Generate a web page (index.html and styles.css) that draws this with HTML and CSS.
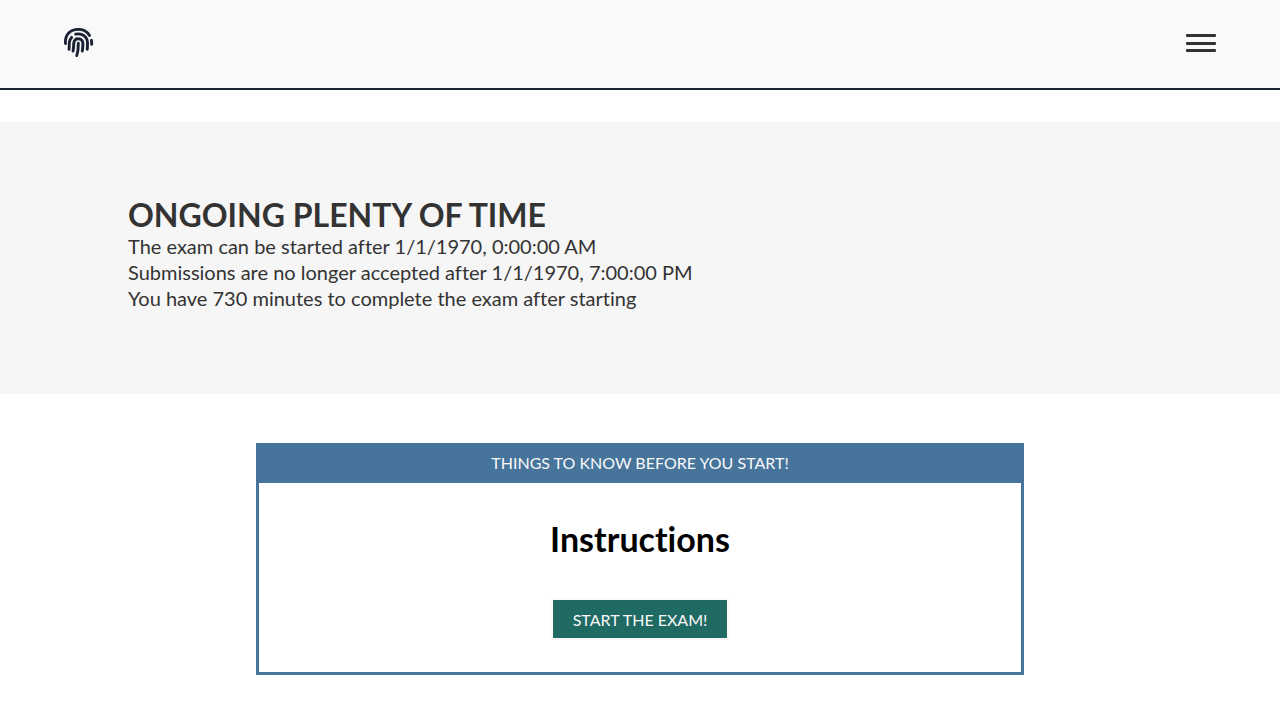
FILE: index.html
```html
<!DOCTYPE html>
<html lang="en">
<head>
<meta charset="utf-8">
<meta name="viewport" content="width=device-width, initial-scale=1">
<title>Ongoing Plenty of Time</title>
<link rel="stylesheet" href="styles.css">
</head>
<body>
<header class="site-header">
  <a class="logo" href="#" aria-label="Home">
    <svg viewBox="0 0 30 30" width="30" height="30" fill="none" stroke="currentColor" stroke-width="2.900" stroke-linecap="round" stroke-linejoin="round" aria-hidden="true">
      <path d="M1.500 15.500C.8 6.500 6.500 1.400 14.200 1.400c5 0 9 2.300 11.300 6"/>
      <path d="M27.400 12.300c.4 1.300.4 2.400.2 4"/>
      <path d="M5 21.200C5.500 18 5 16.500 5.400 14c.3-1.900 1-3.300 2.200-4.600"/>
      <path d="M11.700 6.200C18 4.600 23.500 8.800 23.500 15c0 2.300 0 4-.3 6.200"/>
      <path d="M9 23.100c.8-3.200.5-5 .8-8.100.3-2.700 2-4.300 4.400-4.300 2.900 0 4.700 2 4.700 4.900 0 2.700-.1 4.800-.6 7.500"/>
      <path d="M14.300 15.300c.1 4.400-.2 8.200-1.500 12.300"/>
    </svg>
  </a>
  <button class="menu-button" type="button" aria-label="Open menu">
    <span class="menu-bar"></span>
    <span class="menu-bar"></span>
    <span class="menu-bar"></span>
  </button>
</header>
<main>
  <section class="banner">
    <h1 class="banner-title">Ongoing Plenty of Time</h1>
    <p class="banner-text">The exam can be started after 1/1/1970, 0:00:00 AM</p>
    <p class="banner-text">Submissions are no longer accepted after 1/1/1970, 7:00:00 PM</p>
    <p class="banner-text">You have 730 minutes to complete the exam after starting</p>
  </section>
  <section class="card">
    <p class="card-header">Things to know before you start!</p>
    <div class="card-body">
      <h2 class="card-title">Instructions</h2>
      <button class="start-button" type="button">Start the exam!</button>
    </div>
  </section>
</main>
</body>
</html>
```
FILE: styles.css
```css
* { box-sizing: border-box; margin: 0; }

body {
  background: #fff;
  color: #333;
  font-family: Lato, sans-serif;
  font-size: 16px;
  font-variant-ligatures: none;
}

.site-header {
  display: flex;
  align-items: center;
  justify-content: space-between;
  height: 90px;
  padding: 0 5% 2px;
  background: #f9f9f9;
  border-bottom: 2px solid #1a2433;
}

.logo { display: flex; color: #1a2233; }

.menu-button {
  display: flex;
  flex-direction: column;
  justify-content: space-between;
  width: 30px;
  height: 18px;
  padding: 0;
  border: 0;
  background: none;
}

.menu-bar { width: 100%; height: 3px; border-radius: 1px; background: #333; }

.banner {
  margin-top: 32px;
  padding: 75px 10% 83px;
  background: #f6f6f6;
}

.banner-title {
  font-size: 32px;
  line-height: 36px;
  text-transform: uppercase;
}

.banner-text { font-size: 20px; line-height: 26px; }

.card {
  width: 60%;
  margin: 49px auto 45px;
  border: 3px solid #47749b;
  background: #fff;
  text-align: center;
}

.card-header {
  padding: 7px 16px 10px;
  background: #47749b;
  color: #f9f9f9;
  line-height: 20px;
  text-transform: uppercase;
}

.card-body {
  display: flex;
  flex-direction: column;
  align-items: center;
  gap: 37px;
  padding: 34px 16px 32px;
}

.card-title { color: #000; font-size: 34px; line-height: 44px; }

.start-button {
  padding: 10px 20px 8px;
  border: 2px solid #f9f9f9;
  background: #1f6a63;
  color: #f9f9f9;
  font: inherit;
  line-height: 20px;
  text-transform: uppercase;
}
```
